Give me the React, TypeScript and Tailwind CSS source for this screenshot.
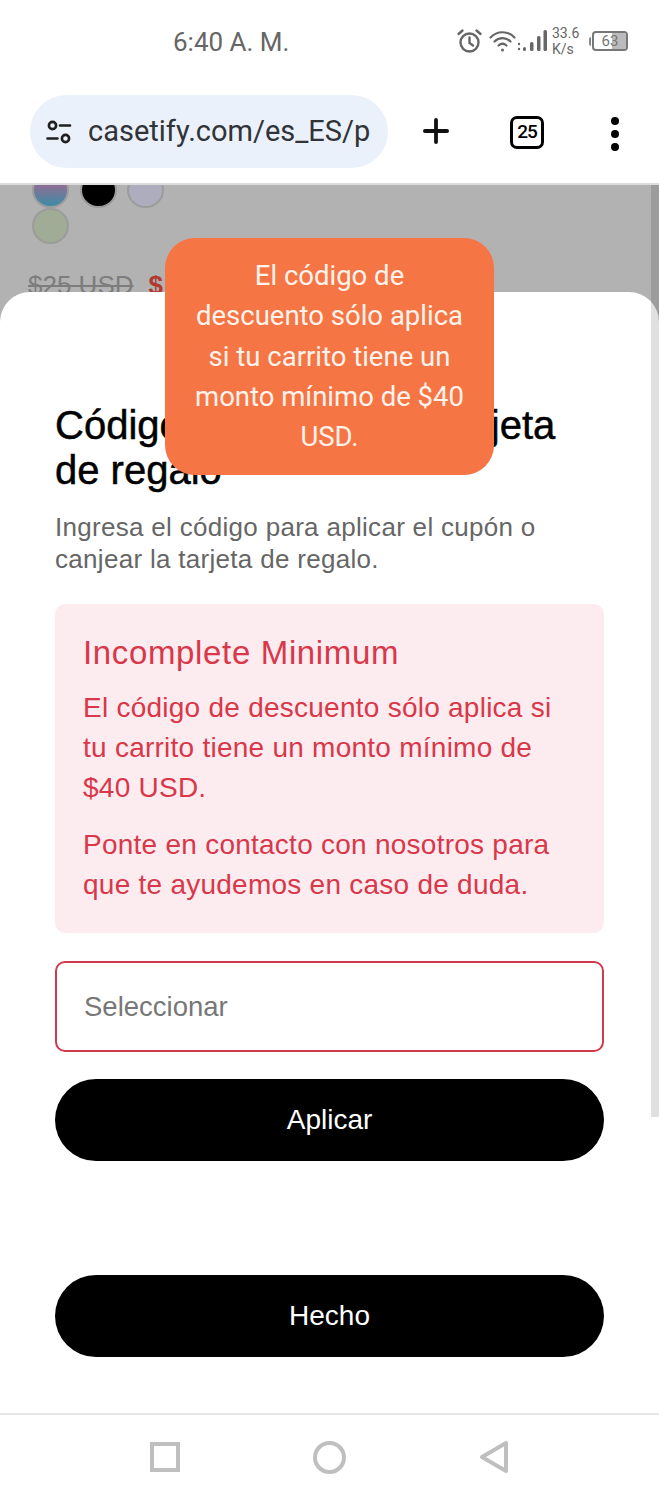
import { Plus } from "lucide-react"

const swatches = [
  "bg-[linear-gradient(#8d6f95_0%,#8d6f95_35%,#3d8ca6_100%)]",
  "bg-black",
  "bg-[#adadbd]",
  "bg-[#a0ac96]",
]

function StatusIcons() {
  return (
    <div className="flex items-center text-[#666]">
      <svg width="27" height="26" viewBox="0 0 27 26" fill="none" stroke="currentColor" strokeWidth="2.4" strokeLinecap="round">
        <circle cx="13.5" cy="14.5" r="9" />
        <path d="M13.5 9.5v5.5l3.5 2.5M2.5 6l4-3.5M24.5 6l-4-3.5" />
      </svg>
      <svg className="ml-[6px]" width="32" height="24" viewBox="0 0 32 24" fill="none" stroke="currentColor" strokeWidth="2.2" strokeLinecap="round">
        <path d="M1.5 8.5c6.5-7 17.5-7 24 0M5.5 12.5c4.500-4.500 11.500-4.500 16 0M9.500 16.500c2.500-2.200 5.500-2.200 8 0" />
        <circle cx="13.500" cy="21" r="1.500" fill="currentColor" stroke="none" />
        <circle cx="30" cy="15" r="1.200" fill="currentColor" stroke="none" />
        <circle cx="30" cy="20" r="1.200" fill="currentColor" stroke="none" />
      </svg>
      <svg className="ml-[2px]" width="24" height="24" viewBox="0 0 24 24" fill="currentColor">
        <rect x="0" y="18" width="3" height="4" rx="1.500" />
        <rect x="7" y="13" width="3.500" height="9" rx="1.500" />
        <rect x="14" y="7" width="3.500" height="15" rx="1.500" />
        <rect x="20.500" y="1" width="3.500" height="21" rx="1.500" />
      </svg>
      <div className="ml-[5px] w-[30px] text-[14px] leading-[16px]">
        <div>33.6</div>
        <div>K/s</div>
      </div>
      <div className="ml-[7px] flex items-center">
        <div className="w-[2px] h-[9px] bg-[#888] rounded-l-sm mr-[1px]" />
        <div className="relative w-[36px] h-[20px] border-2 border-[#777] rounded-[4px] overflow-hidden flex items-center justify-center">
          <div className="absolute right-0 top-0 bottom-0 w-[14px] bg-[#bbb]" />
          <span className="relative text-[15px] leading-none text-[#777]">63</span>
        </div>
      </div>
    </div>
  )
}

function BrowserBar() {
  return (
    <div className="h-[100px] pt-[10px] flex items-start border-b-2 border-[#dcdcdc]">
      <div className="ml-[30px] w-[358px] h-[73px] rounded-full bg-[#ebf1fa] flex items-center pl-[15px]">
        <svg width="28" height="28" viewBox="0 0 28 28" fill="none" stroke="#1f1f1f" strokeWidth="2.600" strokeLinecap="round">
          <circle cx="7.500" cy="7.500" r="3.600" />
          <path d="M15 7.500h10M2.500 20.500h10" />
          <circle cx="20.500" cy="20.500" r="3.600" />
        </svg>
        <span className="ml-[15px] text-[29px] leading-none text-[#303338] whitespace-nowrap">casetify.com/es_ES/p</span>
      </div>
      <Plus className="ml-[29px] mt-[17px] text-[#111]" size={38} strokeWidth={2.400} />
      <div className="ml-[55px] mt-[21px] w-[34px] h-[33px] border-[3px] border-black rounded-[7px] flex items-center justify-center text-[19px] tracking-[-1px] font-medium text-black">25</div>
      <div className="ml-[67px] mt-[22px] flex flex-col gap-[5px]">
        <div className="w-[8px] h-[8px] rounded-full bg-black" />
        <div className="w-[8px] h-[8px] rounded-full bg-black" />
        <div className="w-[8px] h-[8px] rounded-full bg-black" />
      </div>
    </div>
  )
}

function CodeSheet() {
  return (
    <div className="absolute inset-x-0 top-[107px] bottom-0 bg-white rounded-t-[30px] px-[55px] pt-[111px] font-['Liberation_Sans',Arial,sans-serif]">
      <h2 className="text-[40px] leading-[45px] text-black [-webkit-text-stroke:0.5px_black]">
        Código de cupones o tarjeta de regalo
      </h2>
      <p className="mt-[18px] text-[26px] leading-[32px] text-[#666] tracking-[0.3px]">
        Ingresa el código para aplicar el cupón o canjear la tarjeta de regalo.
      </p>
      <div className="mt-[29px] h-[329px] rounded-[10px] bg-[#fdecef] px-[28px] pt-[29px] text-[#d9374a]">
        <div className="text-[33px] leading-[40px] tracking-[0.65px]">Incomplete Minimum</div>
        <p className="mt-[15px] text-[28px] leading-[40px] tracking-[0.25px]">
          El código de descuento sólo aplica si tu carrito tiene un monto mínimo de $40 USD.
        </p>
        <p className="mt-[17px] text-[28px] leading-[40px] tracking-[0.25px]">
          Ponte en contacto con nosotros para que te ayudemos en caso de duda.
        </p>
      </div>
      <div className="mt-[28px] h-[91px] rounded-[10px] border-2 border-[#cf3a4c] flex items-center pl-[27px] text-[27.500px] text-[#777]">
        Seleccionar
      </div>
      <button className="mt-[27px] w-full h-[82px] rounded-full bg-black text-white text-[28px]">Aplicar</button>
      <button className="mt-[114px] w-full h-[82px] rounded-full bg-black text-white text-[28px]">Hecho</button>
    </div>
  )
}

export default function App() {
  return (
    <div className="relative w-[659px] h-[1500px] flex flex-col bg-white overflow-hidden font-['Roboto',sans-serif]">
      <div className="h-[85px] flex items-start pt-[24px] relative">
        <span className="ml-[173px] text-[26px] leading-[36px] text-[#666]">6:40 A. M.</span>
        <div className="absolute left-[456px] top-[25px]">
          <StatusIcons />
        </div>
      </div>
      <BrowserBar />
      <div className="relative flex-1 bg-[#b2b2b2] overflow-hidden">
        <div className="pl-[32px] -mt-[13px] w-[170px] flex flex-wrap gap-x-[10.500px]">
          {swatches.map((color) => (
            <div key={color} className={`w-[37px] h-[36px] rounded-full border-2 border-[#9c9c9c] ${color}`} />
          ))}
        </div>
        <div className="pl-[28px] mt-[22px] flex items-baseline gap-[15px] text-[26px] font-['Liberation_Sans',sans-serif]">
          <span className="line-through text-[#7d7d7d]">$25 USD</span>
          <span className="font-bold text-[#b03a30]">$</span>
        </div>
        <CodeSheet />
        <div className="absolute right-0 top-0 w-[8px] h-[932px] bg-black/[0.12]" />
      </div>
      <div className="h-[87px] shrink-0 border-t-2 border-[#e6e6e6] relative flex items-center bg-white">
        <div className="ml-[150px] -mt-[1px] w-[30px] h-[30px] border-[4px] border-[#bfbfbf]" />
        <div className="ml-[133px] -mt-[1px] w-[33px] h-[33px] border-[4px] border-[#bfbfbf] rounded-full" />
        <svg className="ml-[133px] -mt-[1px]" width="30" height="34" viewBox="0 0 30 34" fill="none" stroke="#bfbfbf" strokeWidth="4" strokeLinejoin="round">
          <path d="M27 3v28L3 17z" />
        </svg>
      </div>
      <div className="absolute left-[165px] top-[238px] w-[329px] h-[237px] rounded-[30px] bg-[#f57545] pt-[18px] text-center text-[27.500px] leading-[40.300px] text-[#fff3ec]">
        El código de
        <br />
        descuento sólo aplica
        <br />
        si tu carrito tiene un
        <br />
        monto mínimo de $40
        <br />
        USD.
      </div>
    </div>
  )
}
